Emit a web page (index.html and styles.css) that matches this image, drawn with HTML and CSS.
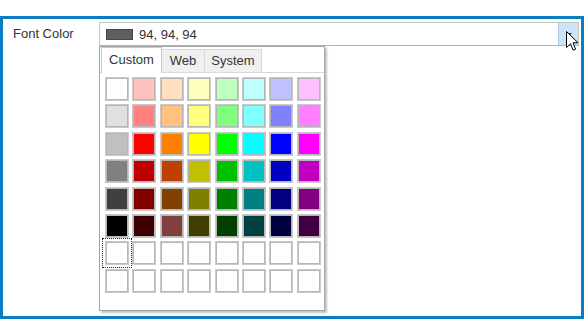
FILE: index.html
```html
<!DOCTYPE html>
<html lang="en">
<head>
    <meta charset="UTF-8">
    <title>Font Color</title>
    <link rel="stylesheet" href="styles.css">
</head>
<body>

<div class="frame">
    <div class="row">
        <label class="label">Font Color</label>
        <div class="field">
            <div class="combo">
                <span class="chip"></span>
                <span class="value">94, 94, 94</span>
                <span class="drop-btn"><span class="arrow"></span></span>
            </div>

            <!-- color picker dropdown -->
            <div class="popup">
                <div class="tabs">
                    <span class="tab tab-custom active">Custom</span>
                    <span class="tab tab-web">Web</span>
                    <span class="tab tab-system">System</span>
                </div>
                <div class="page">
                    <div class="grid" id="grid"></div>
                </div>
            </div>
        </div>
    </div>

    <svg class="cursor" width="13" height="20" viewBox="0 0 13 20">
        <path d="M0.5 0.5 L0.5 16.5 L4.5 12.8 L7.2 19.2 L9.6 18.2 L7 11.8 L12 11.8 Z" fill="#fff" stroke="#000" stroke-width="1"/>
    </svg>
</div>

<script>
    // custom palette, empty strings are unused slots
    const colors = [
        "#ffffff", "#ffc0c0", "#ffe0c0", "#ffffc0", "#c0ffc0", "#c0ffff", "#c0c0ff", "#ffc0ff",
        "#e0e0e0", "#ff8080", "#ffc080", "#ffff80", "#80ff80", "#80ffff", "#8080ff", "#ff80ff",
        "#c0c0c0", "#ff0000", "#ff8000", "#ffff00", "#00ff00", "#00ffff", "#0000ff", "#ff00ff",
        "#808080", "#c00000", "#c04000", "#c0c000", "#00c000", "#00c0c0", "#0000c0", "#c000c0",
        "#404040", "#800000", "#804000", "#808000", "#008000", "#008080", "#000080", "#800080",
        "#000000", "#400000", "#804040", "#404000", "#004000", "#004040", "#000040", "#400040"
    ];

    const grid = document.getElementById("grid");
    for (let i = 0; i < 64; i++) {
        const cell = document.createElement("span");
        cell.className = "cell";
        if (colors[i]) {
            cell.style.backgroundColor = colors[i];
        }
        if (i === 48) {
            cell.classList.add("focused");
        }
        grid.appendChild(cell);
    }
</script>

</body>
</html>
```

FILE: styles.css
```css
body {
    font-family: "Liberation Sans", Arial, sans-serif;
    font-size: 13px;
    color: #333;
    background-color: white;
    margin: 0;
}

.frame {
    position: relative;
    box-sizing: border-box;
    width: 584px;
    height: 303px;
    margin-top: 16px;
    padding: 3px 2px 0 10px;
    border: 3px solid #0a7dc3;
}

.row {
    display: flex;
}

.label {
    width: 86px;
    line-height: 24px;
}

.field {
    flex: 1;
    position: relative;
}

.combo {
    display: flex;
    align-items: center;
    box-sizing: border-box;
    height: 24px;
    padding-left: 6px;
    border: 1px solid #c6c6c6;
    border-bottom-color: #b4b4b4;
}

.chip {
    box-sizing: border-box;
    width: 27px;
    height: 11px;
    background-color: #5e5e5e;
    border: 1px solid #464646;
}

.value {
    margin-left: 6px;
}

.drop-btn {
    display: flex;
    justify-content: center;
    align-items: center;
    align-self: stretch;
    margin-left: auto;
    width: 19px;
    background-color: #cce4f7;
    border-left: 1px solid #a9cbe8;
}

.arrow {
    width: 0;
    height: 0;
    border-left: 3px solid transparent;
    border-right: 3px solid transparent;
    border-top: 3px solid #333;
}

.popup {
    position: absolute;
    left: 0;
    top: 24px;
    box-sizing: border-box;
    width: 226px;
    height: 265px;
    background-color: white;
    border: 1px solid #a6a6a6;
    box-shadow: 2px 2px 2px rgba(0, 0, 0, 0.25);
}

.tabs {
    display: flex;
    align-items: flex-end;
    height: 25px;
    padding-left: 1px;
    border-bottom: 1px solid #d9d9d9;
}

.tab {
    box-sizing: border-box;
    height: 23px;
    line-height: 22px;
    text-align: center;
    background-color: #f0f0f0;
    border: 1px solid #d9d9d9;
    border-bottom: none;
    border-left: none;
}

.tab.active {
    height: 26px;
    line-height: 24px;
    margin-bottom: -1px;
    background-color: white;
    border: 1px solid #c8c8c8;
    border-bottom: none;
}

.tab-custom {
    width: 61px;
}

.tab-web {
    width: 43px;
}

.tab-system {
    width: 57px;
}

.page {
    padding: 4px 4px 0 5px;
}

.grid {
    display: grid;
    grid-template-columns: repeat(8, 24px);
    grid-auto-rows: 24px;
    gap: 3.4px;
}

.cell {
    box-sizing: border-box;
    background-color: white;
    border: 1px solid #cacaca;
    box-shadow: inset 0 0 0 1px #b6b6b6;
}

.cell.focused {
    outline: 1px dotted #222;
    outline-offset: 2px;
}

.cursor {
    position: absolute;
    left: 563px;
    top: 12px;
}
```
